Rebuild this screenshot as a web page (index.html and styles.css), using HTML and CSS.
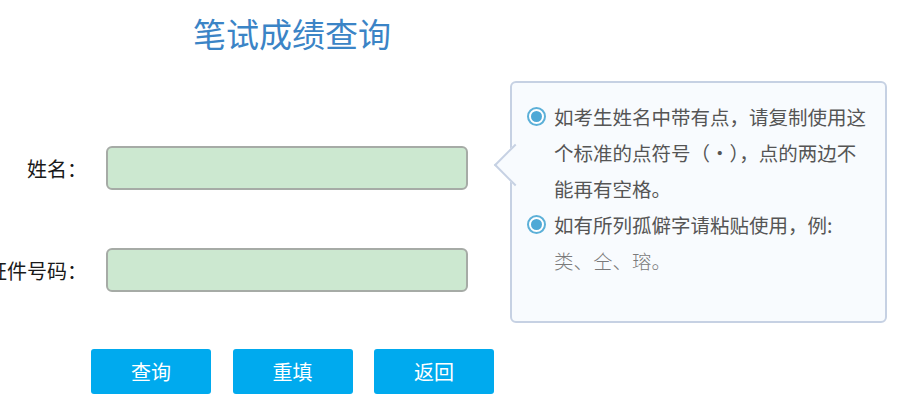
FILE: index.html
```html
<!DOCTYPE html>
<html lang="zh-CN">
<head>
<meta charset="utf-8">
<title>笔试成绩查询</title>
<link rel="stylesheet" href="styles.css">
</head>
<body>
<div class="page">
  <div class="form">
    <h1 class="title">笔试成绩查询</h1>
    <div class="row first">
      <label class="label">姓名：</label>
      <input class="field" type="text">
    </div>
    <div class="row second">
      <label class="label">证件号码：</label>
      <input class="field" type="text">
    </div>
    <div class="buttons">
      <button class="btn">查询</button>
      <button class="btn">重填</button>
      <button class="btn">返回</button>
    </div>
  </div>
  <div class="tip">
    <div class="arrow"></div>
    <ul class="tip-list">
      <li class="tip-item"><span class="dot"></span><span class="tip-text">如考生姓名中带有点，请复制使用这个标准的点符号（·），点的两边不能再有空格。</span></li>
      <li class="tip-item"><span class="dot"></span><span class="tip-text">如有所列孤僻字请粘贴使用，例:<br><span class="rare">类、仝、瑢。</span></span></li>
    </ul>
  </div>
</div>
</body>
</html>
```

FILE: styles.css
```css
* { box-sizing: border-box; }
html, body {
  margin: 0;
  padding: 0;
  background: #ffffff;
  font-family: "Noto Sans CJK SC", "Noto Sans", sans-serif;
  overflow: hidden;
}
.page {
  display: flex;
  align-items: flex-start;
  width: 899px;
  height: 418px;
}
.form {
  width: 510px;
  flex: none;
}
.title {
  margin: 13px 0 0 91px;
  width: 402px;
  text-align: center;
  font-size: 33px;
  line-height: 40px;
  font-weight: normal;
  color: #3b84c6;
}
.row {
  display: flex;
  align-items: center;
}
.row.first { margin-top: 93px; }
.row.second { margin-top: 58px; }
.label {
  width: 100px;
  margin-left: -13px;
  margin-right: 19px;
  text-align: right;
  font-size: 20px;
  color: #1a1a1a;
  white-space: nowrap;
}
.field {
  width: 362px;
  height: 44px;
  border: 2px solid #a6aba6;
  border-radius: 6px;
  background: #cce8d0;
  outline: none;
  margin: 0;
}
.buttons {
  display: flex;
  gap: 21.5px;
  margin: 57px 0 0 91px;
}
.btn {
  width: 120px;
  height: 45px;
  border: none;
  border-radius: 3px;
  background: #00aaee;
  color: #ffffff;
  font-family: "Noto Sans CJK SC", sans-serif;
  font-size: 20px;
  padding: 0;
}
.tip {
  position: relative;
  margin-top: 81px;
  width: 377px;
  height: 242px;
  border: 2px solid #c6d1e3;
  border-radius: 6px;
  background: #f8fbfe;
  padding: 16px 8px 0 15px;
}
.arrow {
  position: absolute;
  left: -12px;
  top: 67px;
  width: 30px;
  height: 30px;
  background: #f8fbfe;
  border-left: 2px solid #c6d1e3;
  border-bottom: 2px solid #c6d1e3;
  transform: rotate(45deg);
}
.tip-list {
  position: relative;
  list-style: none;
  margin: 0;
  padding: 0;
}
.tip-item {
  display: flex;
  align-items: flex-start;
  font-size: 19.5px;
  line-height: 36px;
  color: #555555;
}
.dot {
  flex: none;
  width: 19px;
  height: 19px;
  margin: 8px 8px 0 0;
  border: 2px solid #5cb0d8;
  border-radius: 50%;
  background: #ffffff;
  position: relative;
}
.dot::after {
  content: "";
  position: absolute;
  left: 2px;
  top: 2px;
  width: 11px;
  height: 11px;
  border-radius: 50%;
  background: #4fa9d6;
}
.tip-text {
  flex: none;
  width: 314px;
}
.rare {
  color: #7a7a7a;
  font-weight: 300;
}
```
